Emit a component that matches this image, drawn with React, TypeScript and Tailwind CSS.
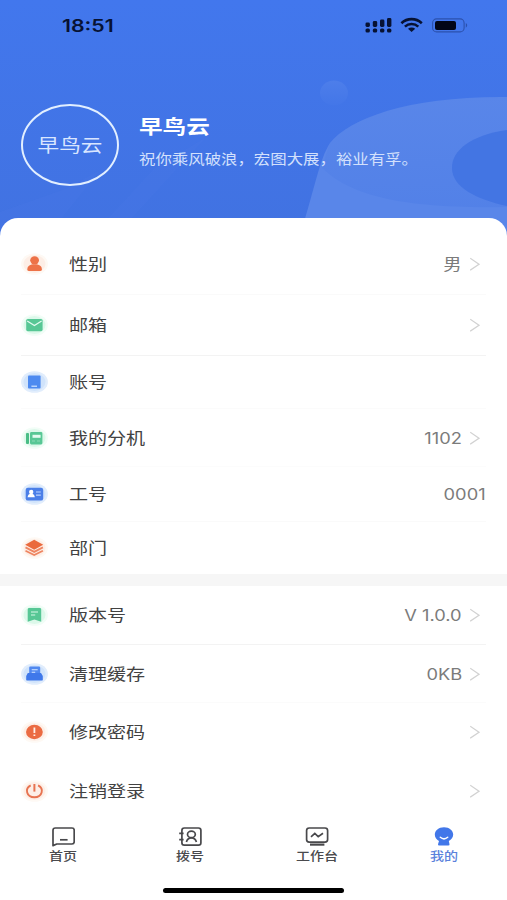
import type { ReactNode } from "react";

type Tone = "red" | "green" | "blue";

const halo: Record<Tone, { inner: string; outer: string }> = {
  red: { inner: "#fdeee6", outer: "#fef9f4" },
  green: { inner: "#dcf8ea", outer: "#f2fdf7" },
  blue: { inner: "#d0e3fb", outer: "#e1edfc" },
};

function RowIcon({ tone, children }: { tone: Tone; children: ReactNode }) {
  return (
    <svg className="h-[22px] w-7 shrink-0" viewBox="0 0 28 22" fill="none">
      <ellipse cx="13.5" cy="11" rx="13.4" ry="10.8" fill={halo[tone].outer} />
      <ellipse cx="13.5" cy="11" rx="11" ry="9" fill={halo[tone].inner} />
      {children}
    </svg>
  );
}

function ProfileRow({
  icon,
  label,
  value,
  arrow = true,
  className,
}: {
  icon: ReactNode;
  label: string;
  value?: string;
  arrow?: boolean;
  className: string;
}) {
  return (
    <div className={`mx-[21px] flex items-center border-b ${className}`}>
      {icon}
      <span className="ml-[19.5px] origin-left scale-x-[1.19] text-[16px] leading-none whitespace-nowrap text-[#424242]">
        {label}
      </span>
      <span className="ml-auto origin-right scale-x-[1.18] pt-[2px] text-[15.5px] leading-none whitespace-nowrap text-[#7b7b7b]">
        {value}
      </span>
      {arrow && (
        <svg className="ml-2 h-3.5 w-4 shrink-0" viewBox="0 0 16 14" fill="none">
          <path d="M0.2 1.2L9 7.2L0.2 13.2" stroke="#d2d2d2" strokeWidth="1.3" />
        </svg>
      )}
    </div>
  );
}

function TabItem({ icon, label, active }: { icon: ReactNode; label: string; active?: boolean }) {
  return (
    <button type="button" className="flex flex-1 flex-col items-center pt-[5px]">
      {icon}
      <span
        className={`mt-px scale-x-[1.17] text-[12px] leading-[14px] font-medium ${active ? "text-[#5b82dc]" : "text-[#4a4a4d]"}`}
      >
        {label}
      </span>
    </button>
  );
}

function StatusIcons() {
  return (
    <svg className="h-5 w-[106px]" viewBox="0 0 106 20" fill="#071233">
      <rect x="0.5" y="6.5" width="4.4" height="4.4" rx="1.4" />
      <rect x="7.8" y="5" width="4.4" height="6" rx="1.4" />
      <rect x="15" y="3.5" width="4.4" height="7.5" rx="1.4" />
      <rect x="22" y="2" width="4.4" height="9" rx="1.4" />
      <rect x="0.5" y="12.5" width="4.4" height="4" rx="1.6" />
      <rect x="7.8" y="12.5" width="4.4" height="4" rx="1.6" />
      <rect x="15" y="12.5" width="4.4" height="4" rx="1.6" />
      <rect x="22" y="12.5" width="4.4" height="4" rx="1.6" />
      <g fill="none" stroke="#071233" strokeWidth="2.6">
        <path d="M36.4 7.2C42.2 1.8 51 1.8 56.8 7.2" />
        <path d="M39.9 10.6C43.7 7.2 49.5 7.2 53.3 10.6" />
      </g>
      <path d="M43 12.8C45.1 11.1 48.1 11.1 50.2 12.8L46.6 16Z" />
      <rect x="67.6" y="2.9" width="31.5" height="13" rx="4" fill="none" stroke="#2b51ad" strokeWidth="1.1" />
      <rect x="70" y="4.9" width="21" height="9.2" rx="2" fill="#020617" />
      <path d="M100.8 7.1Q103.6 9.3 100.8 11.7Z" fill="#2b51ad" />
    </svg>
  );
}

const userIcon = (
  <RowIcon tone="red">
    <ellipse cx="13.6" cy="7.3" rx="4.4" ry="4" fill="#ed7248" />
    <path d="M6.3 16.5C6.3 12.7 9.3 11.2 13.6 11.2C18 11.2 20.9 12.7 20.9 16.5Q20.9 18 19.1 18H8.1Q6.3 18 6.3 16.5Z" fill="#ed7248" />
  </RowIcon>
);

const mailIcon = (
  <RowIcon tone="green">
    <rect x="5.2" y="5" width="16.4" height="12.2" rx="1.6" fill="#57c795" />
    <path d="M6.2 7L13.4 11.5L20.6 7" stroke="#e3fbf0" strokeWidth="1.3" />
  </RowIcon>
);

const accountIcon = (
  <RowIcon tone="blue">
    <rect x="7" y="4.4" width="12.6" height="13" rx="1" fill="#4d8af0" />
    <path d="M10.4 15.2H16" stroke="#d5e6ff" strokeWidth="1.2" />
  </RowIcon>
);

const extensionIcon = (
  <RowIcon tone="green">
    <rect x="5" y="6" width="3" height="11" rx="1" fill="#49bd85" />
    <rect x="9" y="5" width="12.4" height="12.4" rx="1.4" fill="#57c795" />
    <path d="M11.5 7.8H19.6V10.8H11.5Z" fill="#e3fbf0" />
    <path d="M11 14H14M16 14H19" stroke="#8cdab5" strokeWidth="1" />
  </RowIcon>
);

const badgeIcon = (
  <RowIcon tone="blue">
    <rect x="4.7" y="4.8" width="17.5" height="12.8" rx="2.2" fill="#4b7fe8" />
    <ellipse cx="10.2" cy="9" rx="2.2" ry="2.2" fill="#fff" />
    <path d="M6.6 14.2Q7 10.8 10.2 10.8Q13.4 10.8 13.8 14.2Z" fill="#fff" />
    <path d="M15 9H19.8M15 12.2H19.8" stroke="#bcd3ff" strokeWidth="1.2" />
  </RowIcon>
);

const departmentIcon = (
  <RowIcon tone="red">
    <path d="M13.2 2.8L22.2 7.8L13.2 12.8L4.2 7.8Z" fill="#ea6a3d" />
    <path d="M4.5 10.4L13.2 14.9L21.9 10.4M4.5 13.7L13.2 18L21.9 13.7" stroke="#ee8561" strokeWidth="1.8" />
  </RowIcon>
);

const versionIcon = (
  <RowIcon tone="green">
    <path d="M6.7 5.4Q6.7 4 8.2 4H18.8Q20.2 4 20.2 5.4V17.8L13.4 15.4L6.7 17.8Z" fill="#57c795" />
    <path d="M10 8H17M10 11H14.2" stroke="#d9f9e9" strokeWidth="1.2" />
  </RowIcon>
);

const cacheIcon = (
  <RowIcon tone="blue">
    <path d="M8.2 11V4.8Q8.2 3.6 9.5 3.6H17.9Q19.2 3.6 19.2 4.8V11Z" fill="#5088f0" />
    <path d="M5.2 13L6.8 10H20L21.8 13V16.4Q21.8 17.6 20.5 17.6H6.5Q5.2 17.6 5.2 16.4Z" fill="#3f78ea" />
    <path d="M10.7 6.8H16.7M10.7 9.3H14.2" stroke="#d5e6ff" strokeWidth="1.1" />
  </RowIcon>
);

const passwordIcon = (
  <RowIcon tone="red">
    <ellipse cx="13.4" cy="11" rx="8.4" ry="7.2" fill="#eb6b42" />
    <path d="M13.4 6.5V11.9M13.4 13.6V15.1" stroke="#fff0e8" strokeWidth="1.8" />
  </RowIcon>
);

const logoutIcon = (
  <RowIcon tone="red">
    <path d="M9.7 5.4C3.4 8.5 5.4 17.3 13.4 17.3C21.4 17.3 23.4 8.5 17.1 5.4" stroke="#e77350" strokeWidth="1.9" />
    <path d="M13.4 4V11.6" stroke="#e77350" strokeWidth="2" />
  </RowIcon>
);

export default function App() {
  return (
    <div className="relative flex h-[900px] w-[507px] flex-col overflow-hidden bg-[#4275e7] font-['Inter','Noto_Sans_CJK_SC',sans-serif]">
      <svg className="absolute top-0 left-0 h-[236px] w-[507px]" viewBox="0 0 507 236" fill="none">
        <defs>
          <linearGradient id="sky" x1="0" y1="0" x2="0" y2="1">
            <stop stopColor="#4277ed" />
            <stop offset="1" stopColor="#4172e1" />
          </linearGradient>
          <linearGradient id="shade" x1="430" y1="95" x2="430" y2="207" gradientUnits="userSpaceOnUse">
            <stop stopColor="#4c7ce6" stopOpacity="0" />
            <stop offset="1" stopColor="#4c7ce6" stopOpacity="0.5" />
          </linearGradient>
          <linearGradient id="bubble" x1="0" y1="0" x2="0" y2="1">
            <stop stopColor="#4d7eea" />
            <stop offset="1" stopColor="#4376e8" />
          </linearGradient>
        </defs>
        <rect width="507" height="236" fill="url(#sky)" />
        <path d="M0 212L68 188L100 170L60 220L0 236ZM92 236L155 168L205 138L115 236Z" fill="#5582ea" opacity="0.14" />
        <ellipse cx="334" cy="93" rx="14" ry="12.5" fill="url(#bubble)" />
        <path d="M304 222C314 190 320 158 330 143C350 118 410 96 507 97V236H300Z" fill="#5986e9" />
        <path d="M322 168C350 195 400 209 507 207V97C410 96 350 118 330 143C327 150 325 158 322 168Z" fill="url(#shade)" />
        <path d="M507 130C472 135 451 150 452 169C453 187 475 199 507 206Z" fill="#4375e3" />
      </svg>

      <div className="relative flex h-[51px] shrink-0 items-center justify-between pr-9 pl-[62px]">
        <span className="origin-left scale-x-[1.25] pt-px text-[17px] leading-none font-semibold text-[#071233]">18:51</span>
        <StatusIcons />
      </div>

      <header className="relative flex h-[167px] shrink-0 pt-[53px] pl-[20.5px] text-white">
        <div className="flex h-[82px] w-[98px] shrink-0 items-center justify-center rounded-[50%] border-2 border-[#e2efff]">
          <span className="scale-x-[1.2] pt-0.5 text-[18px] leading-none whitespace-nowrap text-[#d9e6ff]">早鸟云</span>
        </div>
        <div className="ml-5 pt-[13px]">
          <h1 className="origin-left scale-x-[1.21] text-[19.5px] leading-5 font-bold">早鸟云</h1>
          <p className="mt-[14px] origin-left scale-x-[1.172] text-[14px] leading-4 whitespace-nowrap text-[#d3e0fc]">
            祝你乘风破浪，宏图大展，裕业有孚。
          </p>
        </div>
      </header>

      <main className="relative flex flex-1 flex-col rounded-t-[18px] bg-white pt-4">
        <ProfileRow className="h-[61px] border-[#fafafa]" icon={userIcon} label="性别" value="男" />
        <ProfileRow className="h-[61px] border-[#f3f3f3]" icon={mailIcon} label="邮箱" />
        <ProfileRow className="h-[53px] border-[#fbfbfb]" icon={accountIcon} label="账号" arrow={false} />
        <ProfileRow className="h-[58px] border-[#fcfcfc]" icon={extensionIcon} label="我的分机" value="1102" />
        <ProfileRow className="h-[55px] border-[#fafafa]" icon={badgeIcon} label="工号" value="0001" arrow={false} />
        <ProfileRow className="h-[52px] border-transparent" icon={departmentIcon} label="部门" arrow={false} />
        <div className="h-3 shrink-0 bg-[#f6f6f6]" />
        <ProfileRow className="h-[59px] border-[#f3f3f3]" icon={versionIcon} label="版本号" value="V 1.0.0" />
        <ProfileRow className="h-[58px] border-[#fbfbfb]" icon={cacheIcon} label="清理缓存" value="0KB" />
        <ProfileRow className="h-[59px] border-transparent" icon={passwordIcon} label="修改密码" />
        <ProfileRow className="h-[58px] border-transparent" icon={logoutIcon} label="注销登录" />

        <nav className="flex h-[67px] shrink-0">
          <TabItem
            label="首页"
            icon={
              <svg className="h-6 w-6" viewBox="0 0 24 24" fill="none" stroke="#48484b" strokeWidth="1.7" strokeLinejoin="round">
                <path d="M2 20.6V5.2Q2 3 4.4 3H21Q23.2 3 23.2 5.2V16.8Q23.2 19 21 19H5.8Z" />
                <path d="M9 14.8H16.6" />
              </svg>
            }
          />
          <TabItem
            label="拨号"
            icon={
              <svg className="h-6 w-6" viewBox="0 0 24 24" fill="none" stroke="#48484b" strokeWidth="1.7">
                <rect x="3.9" y="3" width="19" height="17.2" rx="2.4" />
                <ellipse cx="13.4" cy="9.4" rx="3.9" ry="3.2" />
                <path d="M8.4 17Q9.4 12.8 13.4 12.8Q17.4 12.8 18.4 17M1.2 8.4H5.6M1.2 14.6H5.6" />
              </svg>
            }
          />
          <TabItem
            label="工作台"
            icon={
              <svg className="h-6 w-6" viewBox="0 0 24 24" fill="none" stroke="#48484b" strokeWidth="1.7">
                <rect x="1.6" y="3" width="21" height="14.2" rx="2.6" />
                <path d="M6 11.8L9.8 8.4L13.2 11.6L18 8.2" />
                <path d="M5 19.6H19.4" strokeWidth="2.2" />
              </svg>
            }
          />
          <TabItem
            active
            label="我的"
            icon={
              <svg className="h-6 w-6" viewBox="0 0 24 24" fill="none">
                <path d="M12 2.2C6.6 2.2 2.8 5.5 2.8 9.6C2.8 12.5 4.4 14.8 7 16L6 19.2Q5.8 20.6 7.2 20.6H16.2Q17.8 20.6 17.5 19.2L16.8 16C19.4 14.8 21.2 12.5 21.2 9.6C21.2 5.5 17.4 2.2 12 2.2Z" fill="#4277e9" />
                <path d="M8.3 12.3Q12 15.4 15.7 12.3" stroke="#fff" strokeWidth="1.5" strokeLinecap="round" />
              </svg>
            }
          />
        </nav>
        <div className="mx-auto mt-px h-[5px] w-[181px] shrink-0 rounded-full bg-black" />
      </main>
    </div>
  );
}
